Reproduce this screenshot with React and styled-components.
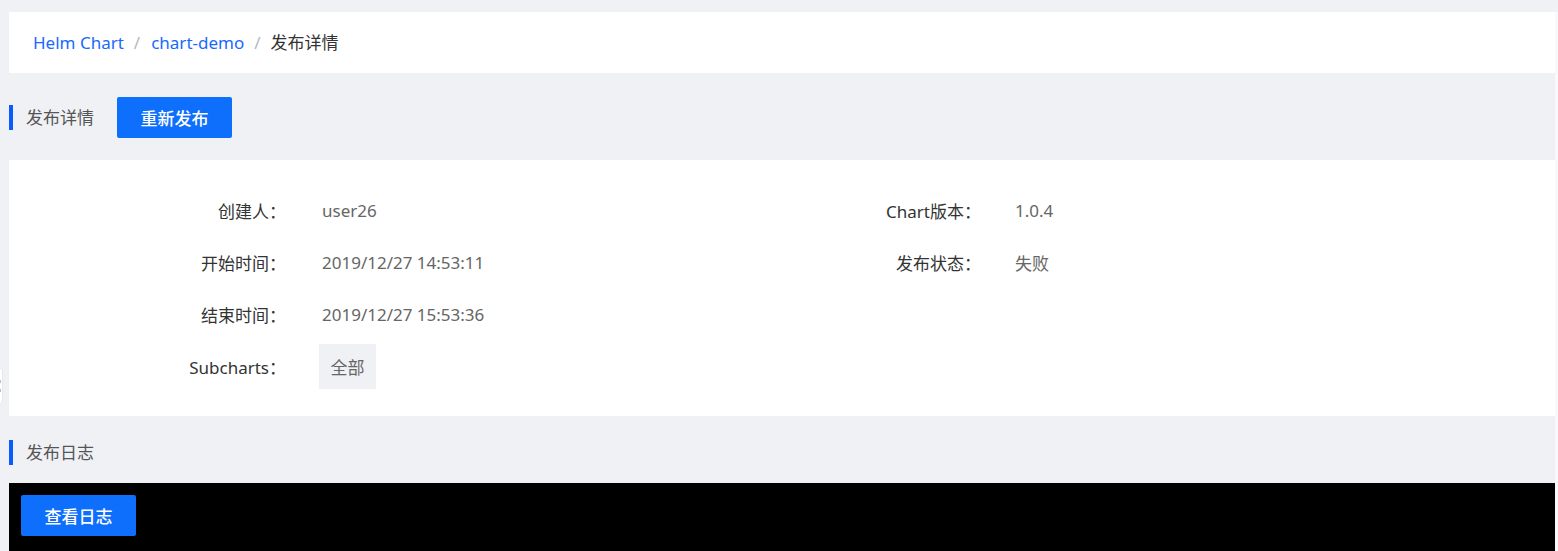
import React from "react";
import styled, { createGlobalStyle } from "styled-components";

const GlobalStyle = createGlobalStyle`
  html, body {
    margin: 0;
    padding: 0;
    background: #f0f1f5;
    overflow: hidden;
  }
  body {
    font-family: "Noto Sans", "Noto Sans CJK SC", sans-serif;
    font-size: 17px;
    color: #333;
  }
  * { box-sizing: border-box; }
`;

const Page = styled.div`
  display: flex;
  width: 1558px;
  height: 551px;
  position: relative;
`;

const Main = styled.div`
  flex: 1;
  display: flex;
  flex-direction: column;
  padding: 12px 0 0 9px;
  min-width: 0;
`;

const ScrollTrack = styled.div`
  width: 3px;
  margin-top: 12px;
  background: #f9f9fb;
`;

const Card = styled.div`
  background: #ffffff;
`;

const BreadcrumbBar = styled(Card)`
  height: 61px;
  display: flex;
  align-items: center;
  padding-left: 24px;
  line-height: 1;
`;

const Crumb = styled.a`
  color: ${(p) => (p.$current ? "#333333" : "#1769ff")};
  text-decoration: none;
  cursor: ${(p) => (p.$current ? "default" : "pointer")};
`;

const Sep = styled.span`
  color: #b4b8c2;
  margin: 0 ${(p) => p.$left}px 0 ${(p) => p.$right}px;
`;

const SectionHead = styled.div`
  display: flex;
  align-items: center;
  padding: ${(p) => p.$padding};
`;

const Accent = styled.span`
  width: 4px;
  height: 25px;
  background: #0a5cff;
  flex: none;
`;

const SectionTitle = styled.span`
  margin-left: 13px;
  color: #555555;
  line-height: 1;
`;

const PrimaryButton = styled.button`
  width: 115px;
  height: 41px;
  border: none;
  border-radius: 2px;
  background: #0f6ffd;
  color: #ffffff;
  font-family: inherit;
  font-size: 17px;
  font-weight: 500;
  cursor: pointer;
  margin-left: ${(p) => p.$ml || 0}px;
  flex: none;
`;

const DetailCard = styled(Card)`
  padding: 24px 0 24px;
  display: grid;
  grid-template-columns: 277px 428px 267px 1fr;
  grid-auto-rows: 52px;
  align-items: center;
`;

const Label = styled.div`
  text-align: right;
  color: #333333;
  white-space: nowrap;
`;

const Value = styled.div`
  color: #666666;
  white-space: nowrap;
  padding-left: ${(p) => p.$gap}px;
`;

const Tag = styled.span`
  display: inline-flex;
  align-items: center;
  justify-content: center;
  width: 57px;
  height: 45px;
  margin-left: -3px;
  background: #f0f1f5;
  color: #666666;
`;

const Empty = styled.div``;

const LogPanel = styled.div`
  background: #000000;
  padding: 12px;
  flex: 1;
`;

const Handle = styled.div`
  position: absolute;
  left: -10px;
  top: 367px;
  width: 13px;
  height: 38px;
  background: #ffffff;
  border: 1px solid #e6e7eb;
  border-radius: 5px;
  display: flex;
  flex-direction: column;
  align-items: flex-end;
  justify-content: center;
  gap: 6px;
  padding-right: 1px;
`;

const HandleMark = styled.span`
  width: 2px;
  height: 3px;
  background: #b9bcc4;
`;

const rows = [
  ["创建人：", "user26", "Chart版本：", "1.0.4"],
  ["开始时间：", "2019/12/27 14:53:11", "发布状态：", "失败"],
  ["结束时间：", "2019/12/27 15:53:36", null, null],
];

export default function App() {
  return (
    <>
      <GlobalStyle />
      <Page>
        <Main>
          <BreadcrumbBar>
            <Crumb>Helm Chart</Crumb>
            <Sep $right={10} $left={11}>/</Sep>
            <Crumb>chart-demo</Crumb>
            <Sep $right={10} $left={10}>/</Sep>
            <Crumb $current>发布详情</Crumb>
          </BreadcrumbBar>

          <SectionHead $padding="24px 0 22px">
            <Accent />
            <SectionTitle>发布详情</SectionTitle>
            <PrimaryButton $ml={23}>重新发布</PrimaryButton>
          </SectionHead>

          <DetailCard>
            {rows.map((r, i) => (
              <React.Fragment key={i}>
                <Label>{r[0]}</Label>
                <Value $gap={36}>{r[1]}</Value>
                {r[2] ? <Label>{r[2]}</Label> : <Empty />}
                {r[3] ? <Value $gap={34}>{r[3]}</Value> : <Empty />}
              </React.Fragment>
            ))}
            <Label>Subcharts：</Label>
            <Value $gap={36}>
              <Tag>全部</Tag>
            </Value>
            <Empty />
            <Empty />
          </DetailCard>

          <SectionHead $padding="24px 0 18px">
            <Accent />
            <SectionTitle>发布日志</SectionTitle>
          </SectionHead>

          <LogPanel>
            <PrimaryButton>查看日志</PrimaryButton>
          </LogPanel>
        </Main>
        <ScrollTrack />
        <Handle>
          <HandleMark />
          <HandleMark />
        </Handle>
      </Page>
    </>
  );
}
